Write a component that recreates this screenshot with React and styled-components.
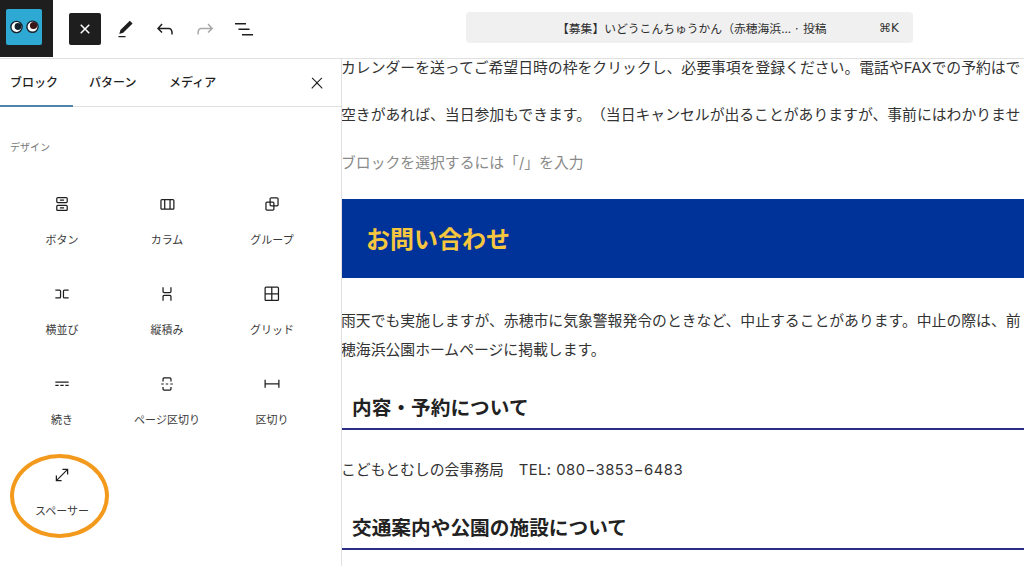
import styled, { createGlobalStyle } from "styled-components";

const GlobalStyle = createGlobalStyle`
  html, body {
    margin: 0;
    padding: 0;
    background: #fff;
  }
  body {
    font-family: "Noto Sans CJK JP", "Liberation Sans", sans-serif;
    color: #1e1e1e;
    text-spacing-trim: space-all;
  }
`;

const Page = styled.div`
  width: 1024px;
  height: 566px;
  overflow: hidden;
  display: flex;
  flex-direction: column;
  background: #fff;
`;

const TopBar = styled.header`
  height: 58px;
  flex: none;
  display: flex;
  align-items: flex-start;
  border-bottom: 1px solid #e0e0e0;
`;

const LogoBox = styled.div`
  width: 53px;
  height: 57px;
  background: #1e1e1e;
  display: flex;
  padding: 9px 0 0 6px;
  box-sizing: border-box;
`;

const Tools = styled.div`
  display: flex;
  align-items: center;
  height: 58px;
  margin-left: 16px;
  width: 397px;
  flex: none;
`;

const CloseTool = styled.button`
  width: 32px;
  height: 32px;
  margin-top: -1px;
  padding: 0;
  border: none;
  border-radius: 2px;
  background: #1e1e1e;
  color: #fff;
  display: flex;
  align-items: center;
  justify-content: center;
`;

const ToolButton = styled.button`
  width: 24px;
  height: 24px;
  margin-left: ${(p) => p.$gap}px;
  padding: 0;
  border: none;
  background: none;
  color: ${(p) => (p.$off ? "#a8a8a8" : "#1e1e1e")};
  display: flex;
  align-items: center;
  justify-content: center;
`;

const CommandBar = styled.div`
  width: 447px;
  height: 31px;
  margin-top: 12px;
  flex: none;
  border-radius: 4px;
  background: #f0f0f0;
  display: flex;
  align-items: center;
  font-size: 11.8px;
  color: #2c2c2c;
`;

const CommandTitle = styled.span`
  margin-left: 91px;
  width: 322px;
  white-space: nowrap;
`;

const Shortcut = styled.span`
  font-family: "DejaVu Sans", sans-serif;
  font-size: 12px;
  color: #333;
  white-space: nowrap;
`;

const Body = styled.div`
  flex: 1;
  display: flex;
  min-height: 0;
`;

const Sidebar = styled.aside`
  width: 341px;
  flex: none;
  border-right: 1px solid #e0e0e0;
`;

const Tabs = styled.div`
  height: 47px;
  display: flex;
  align-items: center;
  border-bottom: 1px solid #e0e0e0;
`;

const Tab = styled.button`
  width: ${(p) => p.$width}px;
  height: 47px;
  flex: none;
  padding: 0 0 2px ${(p) => p.$pad}px;
  border: none;
  margin-bottom: -1px;
  background: none;
  text-align: left;
  font: 500 12px "Noto Sans CJK JP", sans-serif;
  color: #1e1e1e;
  border-bottom: 2px solid ${(p) => (p.$active ? "#4f85ab" : "transparent")};
`;

const TabClose = styled.button`
  margin-left: auto;
  margin-right: 12px;
  width: 24px;
  height: 24px;
  padding: 0;
  border: none;
  background: none;
  color: #1e1e1e;
  display: flex;
  align-items: center;
  justify-content: center;
`;

const SectionLabel = styled.div`
  font-size: 10px;
  line-height: 14px;
  color: #757575;
  margin: 33px 0 0 10px;
`;

const BlockGrid = styled.div`
  display: grid;
  grid-template-columns: repeat(3, 105px);
  grid-auto-rows: 90.2px;
  margin: 40px 0 0 9.5px;
`;

const BlockItem = styled.div`
  position: relative;
  display: flex;
  flex-direction: column;
  align-items: center;
  color: #1e1e1e;
`;

const BlockIcon = styled.div`
  width: 20px;
  height: 20px;
  display: flex;
`;

const BlockName = styled.span`
  margin-top: 17px;
  font-size: 11px;
  line-height: 16px;
  color: #3a3a3a;
  white-space: nowrap;
`;

const Callout = styled.div`
  position: absolute;
  left: 0.5px;
  top: -11px;
  width: 99px;
  height: 84px;
  box-sizing: border-box;
  border: 4px solid #f39a1d;
  border-radius: 50%;
`;

const Editor = styled.main`
  flex: 1;
  min-width: 0;
  overflow: hidden;
`;

const Scroller = styled.div`
  width: 700px;
  margin: -5px 0 0 -1px;
`;

const Para = styled.p`
  margin: ${(p) => p.$top || 0}px 0 0;
  font-family: Inter, "Noto Sans CJK JP", sans-serif;
  font-size: 14.83px;
  line-height: 29px;
  color: ${(p) => (p.$hint ? "#8a8a8a" : "#333")};
  white-space: nowrap;
`;

const Phone = styled.span`
  letter-spacing: 0.45px;
`;

const Banner = styled.h2`
  margin: 21px 0 0;
  height: 79px;
  padding: 0 0 3px 25px;
  box-sizing: border-box;
  display: flex;
  align-items: center;
  background: #003399;
  color: #f6c63e;
  font-size: 24px;
  font-weight: 700;
`;

const Heading = styled.h3`
  margin: ${(p) => p.$top}px 0 0;
  padding: 0 0 6px 11px;
  font-size: 19.7px;
  line-height: 30px;
  font-weight: 700;
  color: #222;
  border-bottom: 2px solid #2a2f86;
`;

const Icon = ({ d, size = 24, evenOdd }) => (
  <svg width={size} height={size} viewBox="0 0 24 24" fill="currentColor">
    <path d={d} fillRule={evenOdd ? "evenodd" : undefined} clipRule={evenOdd ? "evenodd" : undefined} />
  </svg>
);

const paths = {
  closeSmall:
    "M12 13.06l3.712 3.713 1.061-1.06L13.061 12l3.712-3.712-1.06-1.06L12 10.938 8.288 7.227l-1.061 1.06L10.939 12l-3.712 3.712 1.06 1.061L12 13.061z",
  close:
    "M13 11.8l6.1-6.3-1-1-6.1 6.2-6.1-6.2-1 1 6.1 6.3-6.5 6.7 1 1 6.5-6.6 6.5 6.6 1-1z",
  pencil: "M20.1 5.1L16.9 2 6.2 12.7l-1.3 4.4 4.5-1.3L20.1 5.1zM4 20.8h8v-1.5H4v1.5z",
  undo: "M18.3 11.7c-.6-.6-1.4-.9-2.3-.9H6.7l2.9-3.3-1.1-1-4.5 5L8.5 16l1-1-2.7-2.7H16c.5 0 .9.2 1.3.5 1 1 1 3.4 1 4.5v.3h1.5v-.2c0-1.5 0-4.3-1.5-5.7z",
  redo: "M15.6 6.5l-1.1 1 2.9 3.3H8c-.9 0-1.7.3-2.3.9-1.4 1.5-1.4 4.2-1.4 5.6v.2h1.5v-.3c0-1.1 0-3.5 1-4.5.3-.3.7-.5 1.3-.5h9.2L14.5 15l1.1 1.1 4.6-4.6-4.6-5z",
  list: "M3 6h11v1.5H3V6Zm3.5 5.5h11V13h-11v-1.5ZM21 17H10v1.5h11V17Z",
  buttons:
    "M14.5 17.5H9.5V16H14.5V17.5Z M14.5 8H9.5V6.5H14.5V8Z M7 3.5H17C18.1 3.5 19 4.4 19 5.5V9C19 10.1 18.1 11 17 11H7C5.9 11 5 10.1 5 9V5.5C5 4.4 5.9 3.5 7 3.5ZM17 5H7C6.72 5 6.5 5.22 6.5 5.5V9C6.5 9.28 6.72 9.5 7 9.5H17C17.28 9.5 17.5 9.28 17.5 9V5.5C17.5 5.22 17.28 5 17 5Z M7 13H17C18.1 13 19 13.9 19 15V18.5C19 19.6 18.1 20.5 17 20.5H7C5.9 20.5 5 19.6 5 18.5V15C5 13.9 5.9 13 7 13ZM17 14.5H7C6.72 14.5 6.5 14.72 6.5 15V18.5C6.5 18.78 6.72 19 7 19H17C17.28 19 17.5 18.78 17.5 18.5V15C17.5 14.72 17.28 14.5 17 14.5Z",
  columns:
    "M19 6H6c-1.1 0-2 .9-2 2v9c0 1.1.9 2 2 2h13c1.1 0 2-.9 2-2V8c0-1.1-.9-2-2-2zm-4.1 1.5v10H10v-10h4.9zM5.5 17V8c0-.3.2-.5.5-.5h2.5v10H6c-.3 0-.5-.2-.5-.5zm14 0c0 .3-.2.5-.5.5h-2.6v-10H19c.3 0 .5.2.5.5v9z",
  group:
    "M18 4h-7c-1.1 0-2 .9-2 2v3H6c-1.1 0-2 .9-2 2v7c0 1.1.9 2 2 2h7c1.1 0 2-.9 2-2v-3h3c1.1 0 2-.9 2-2V6c0-1.1-.9-2-2-2zm-4.5 14c0 .3-.2.5-.5.5H6c-.3 0-.5-.2-.5-.5v-7c0-.3.2-.5.5-.5h3V13c0 1.1.9 2 2 2h2.5v3zm0-4.5H11c-.3 0-.5-.2-.5-.5v-2.5H13c.3 0 .5.2.5.5v2.5zm5-.5c0 .3-.2.5-.5.5h-3V11c0-1.1-.9-2-2-2h-2.5V6c0-.3.2-.5.5-.5h7c.3 0 .5.2.5.5v7z",
  row: "M4 6.5h5a2 2 0 0 1 2 2v7a2 2 0 0 1-2 2H4V16h5a.5.5 0 0 0 .5-.5v-7A.5.5 0 0 0 9 8H4V6.5Zm16 0h-5a2 2 0 0 0-2 2v7a2 2 0 0 0 2 2h5V16h-5a.5.5 0 0 1-.5-.5v-7A.5.5 0 0 1 15 8h5V6.5Z",
  stack:
    "M17.5 4v5a2 2 0 0 1-2 2h-7a2 2 0 0 1-2-2V4H8v5a.5.5 0 0 0 .5.5h7A.5.5 0 0 0 16 9V4h1.5Zm0 16v-5a2 2 0 0 0-2-2h-7a2 2 0 0 0-2 2v5H8v-5a.5.5 0 0 1 .5-.5h7a.5.5 0 0 1 .5.5v5h1.5Z",
  grid: "M3 5c0-1.1.9-2 2-2h13.5c1.1 0 2 .9 2 2v13.5c0 1.1-.9 2-2 2H5c-1.1 0-2-.9-2-2V5Zm2-.5h6V11H4.5V5c0-.28.22-.5.5-.5ZM4.5 12.5v6c0 .28.22.5.5.5h6v-6.5H4.5Zm8 0V19h6c.28 0 .5-.22.5-.5v-6h-6.5Zm0-8V11H19V5c0-.28-.22-.5-.5-.5h-6Z",
  more: "M4 9v1.5h16V9H4zm12 5.5h4V13h-4v1.5zm-6 0h4V13h-4v1.5zm-6 0h4V13H4v1.5z",
  pageBreak:
    "M17.5 9V6a2 2 0 0 0-2-2h-7a2 2 0 0 0-2 2v3H8V6a.5.5 0 0 1 .5-.5h7a.5.5 0 0 1 .5.5v3h1.5Zm0 6.5V18a2 2 0 0 1-2 2h-7a2 2 0 0 1-2-2v-2.5H8V18a.5.5 0 0 0 .5.5h7a.5.5 0 0 0 .5-.5v-2.5h1.5ZM5 11.5h3v1H5z M10.500 11.500h3v1h-3z M16 11.5h3v1h-3z",
  separator: "M4.5 12.5v4H3V7h1.5v3.987h15V7H21v9.5h-1.5v-4h-15Z",
  spacer: "M7 18h4.5v1.5h-7v-7H6V17L17 6h-4.5V4.5h7v7H18V7L7 18Z",
};

const blocks = [
  { name: "ボタン", icon: paths.buttons },
  { name: "カラム", icon: paths.columns },
  { name: "グループ", icon: paths.group },
  { name: "横並び", icon: paths.row },
  { name: "縦積み", icon: paths.stack },
  { name: "グリッド", icon: paths.grid, evenOdd: true },
  { name: "続き", icon: paths.more },
  { name: "ページ区切り", icon: paths.pageBreak },
  { name: "区切り", icon: paths.separator },
  { name: "スペーサー", icon: paths.spacer, marked: true },
];

function Logo() {
  return (
    <svg width="36" height="36" viewBox="0 0 36 36">
      <rect width="36" height="36" rx="2" fill="#2ea9d3" />
      <circle cx="10.5" cy="18" r="5.6" fill="#fff" stroke="#16222b" strokeWidth="1.4" />
      <circle cx="26.5" cy="17.7" r="5.6" fill="#fff" stroke="#16222b" strokeWidth="1.4" />
      <circle cx="12" cy="17.5" r="3.4" fill="#16222b" />
      <circle cx="27.5" cy="16.5" r="3.6" fill="#3a1518" />
    </svg>
  );
}

export default function App() {
  return (
    <Page>
      <GlobalStyle />
      <TopBar>
        <LogoBox>
          <Logo />
        </LogoBox>
        <Tools>
          <CloseTool>
            <Icon d={paths.closeSmall} size={24} />
          </CloseTool>
          <ToolButton $gap={12}>
            <Icon d={paths.pencil} size={21} />
          </ToolButton>
          <ToolButton $gap={16}>
            <Icon d={paths.undo} />
          </ToolButton>
          <ToolButton $gap={16} $off>
            <Icon d={paths.redo} />
          </ToolButton>
          <ToolButton $gap={15}>
            <Icon d={paths.list} />
          </ToolButton>
        </Tools>
        <CommandBar>
          <CommandTitle>【募集】いどうこんちゅうかん（赤穂海浜... · 投稿</CommandTitle>
          <Shortcut>⌘K</Shortcut>
        </CommandBar>
      </TopBar>
      <Body>
        <Sidebar>
          <Tabs>
            <Tab $width={73} $pad={10} $active>ブロック</Tab>
            <Tab $width={80} $pad={16}>パターン</Tab>
            <Tab $width={78} $pad={16}>メディア</Tab>
            <TabClose>
              <Icon d={paths.close} size={18} />
            </TabClose>
          </Tabs>
          <SectionLabel>デザイン</SectionLabel>
          <BlockGrid>
            {blocks.map((b) => (
              <BlockItem key={b.name}>
                {b.marked && <Callout />}
                <BlockIcon>
                  <Icon d={b.icon} size={20} evenOdd={b.evenOdd} />
                </BlockIcon>
                <BlockName>{b.name}</BlockName>
              </BlockItem>
            ))}
          </BlockGrid>
        </Sidebar>
        <Editor>
          <Scroller>
            <Para>カレンダーを送ってご希望日時の枠をクリックし、必要事項を登録ください。電話やFAXでの予約はで</Para>
            <Para $top={18}>空きがあれば、当日参加もできます。（当日キャンセルが出ることがありますが、事前にはわかりませ</Para>
            <Para $top={19} $hint>ブロックを選択するには「/」を入力</Para>
            <Banner>お問い合わせ</Banner>
            <Para $top={29}>雨天でも実施しますが、赤穂市に気象警報発令のときなど、中止することがあります。中止の際は、前</Para>
            <Para>穂海浜公園ホームページに掲載します。</Para>
            <Heading $top={27}>内容・予約について</Heading>
            <Para $top={26}>こどもとむしの会事務局　<Phone>TEL: 080−3853−6483</Phone></Para>
            <Heading $top={27}>交通案内や公園の施設について</Heading>
          </Scroller>
        </Editor>
      </Body>
    </Page>
  );
}
